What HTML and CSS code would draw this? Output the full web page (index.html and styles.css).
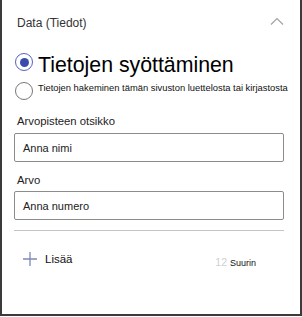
FILE: index.html
```html
<!DOCTYPE html>
<html>

<head>
	<title>Data (Tiedot)</title>
	<link rel="stylesheet" href="styles.css">
</head>

<body>
	<div class="panel">
		<div class="head">
			<span class="head-title">Data (Tiedot)</span>
			<svg class="chevron" width="14" height="8" viewBox="0 0 14 8">
				<path d="M1 7.5 L7 1.5 L13 7.5" fill="none" stroke="#a3a3a3" stroke-width="1.2" />
			</svg>
		</div>

		<div class="choices">
			<label class="choice choice-big">
				<span class="radio checked"></span>
				<span class="choice-text">Tietojen syöttäminen</span>
			</label>
			<label class="choice choice-small">
				<span class="radio"></span>
				<span class="choice-text">Tietojen hakeminen tämän sivuston luettelosta tai kirjastosta</span>
			</label>
		</div>

		<div class="field field-first">
			<div class="field-label">Arvopisteen otsikko</div>
			<div class="field-input">Anna nimi</div>
		</div>

		<div class="field field-second">
			<div class="field-label">Arvo</div>
			<div class="field-input">Anna numero</div>
		</div>

		<div class="divider"></div>

		<div class="add-row">
			<svg class="plus" width="14" height="14" viewBox="0 0 14 14">
				<path d="M7 0 V14 M0 7 H14" stroke="#7f88b8" stroke-width="1.3" />
			</svg>
			<span class="add-text">Lisää</span>
			<span class="size">
				<span class="size-num">12</span>
				<span class="size-text">Suurin</span>
			</span>
		</div>
	</div>
</body>

</html>
```

FILE: styles.css
```css
body {
	margin: 0;
	padding: 0;
	background-color: #fff;
}

.panel {
	width: 302px;
	height: 316px;
	box-sizing: border-box;
	border: 2px solid #3b3b3b;
	border-top: none;
	padding: 14px 16px 0 12px;
	font-family: "Liberation Sans", Arial, sans-serif;
	color: #222;
}

.head {
	display: flex;
	justify-content: space-between;
	align-items: center;
	height: 18px;
	padding-left: 3px;
}

.head-title {
	font-size: 12px;
	color: #333;
}

.chevron {
	margin-top: -4px;
}

.choices {
	margin-top: 20px;
}

.choice {
	display: flex;
	align-items: flex-start;
	gap: 5px;
}

.radio {
	flex: none;
	box-sizing: border-box;
	width: 18px;
	height: 18px;
	margin-left: 1px;
	border: 1.5px solid #777;
	border-radius: 50%;
	display: flex;
	align-items: center;
	justify-content: center;
}

.radio.checked {
	border-color: #5363c2;
}

.radio.checked::after {
	content: "";
	width: 9px;
	height: 9px;
	border-radius: 50%;
	background-color: #3a4aae;
}

.choice-big .radio {
	margin-top: 1px;
}

.choice-big .choice-text {
	font-size: 21.3px;
	line-height: 26px;
	color: #000;
}

.choice-small {
	margin-top: 4px;
}

.choice-small .choice-text {
	font-size: 9.4px;
	line-height: 12px;
	white-space: nowrap;
	color: #111;
}

.field-first {
	margin-top: 14px;
}

.field-second {
	margin-top: 11px;
}

.field-label {
	padding-left: 3px;
	font-size: 11.3px;
	line-height: 14px;
	color: #222;
}

.field-first .field-label {
	margin-bottom: 5px;
}

.field-second .field-label {
	margin-bottom: 4px;
}

.field-input {
	height: 29px;
	box-sizing: border-box;
	border: 1px solid #8c8c8c;
	border-radius: 2px;
	padding-left: 8px;
	display: flex;
	align-items: center;
	font-size: 11px;
	color: #222;
}

.divider {
	margin-top: 10px;
	height: 1px;
	background-color: #c4c4c4;
}

.add-row {
	display: flex;
	align-items: center;
	margin-top: 21px;
	height: 14px;
	padding-left: 9px;
}

.add-text {
	margin-left: 8px;
	font-size: 11.5px;
	color: #111;
}

.size {
	margin-left: auto;
	margin-right: 28px;
	display: flex;
	align-items: baseline;
	gap: 3px;
	padding-top: 6px;
}

.size-num {
	font-size: 10.5px;
	color: #cfcfcf;
}

.size-text {
	font-size: 9px;
	color: #111;
}
```
